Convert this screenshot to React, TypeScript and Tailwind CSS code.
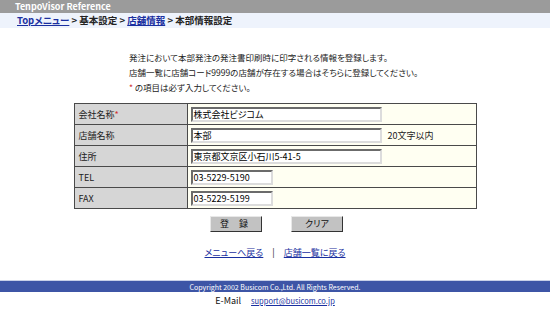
const FONT = "font-['Noto_Sans_CJK_JP','Noto_Sans',sans-serif]";

const ROWS = [
  { label: "会社名称", required: true, value: "株式会社ビジコム", wide: true },
  { label: "店舗名称", value: "本部", wide: true, note: "20文字以内" },
  { label: "住所", value: "東京都文京区小石川5-41-5", wide: true },
  { label: "TEL", value: "03-5229-5190" },
  { label: "FAX", value: "03-5229-5199" },
];

function Field({ value, wide }: { value: string; wide?: boolean }) {
  return (
    <div
      className={`${wide ? "w-[191px]" : "w-[82px]"} h-[15px] bg-white border-2 border-t-[#6b6b6b] border-l-[#6b6b6b] border-b-[#dcdcdc] border-r-[#dcdcdc] pl-[1px] text-[9px] leading-[11px] text-black whitespace-nowrap overflow-hidden`}
    >
      {value}
    </div>
  );
}

export default function App() {
  return (
    <div className={`w-[550px] h-[328px] bg-white text-black ${FONT} [font-feature-settings:'palt']`}>
      <div className="h-[13px] bg-[#9b9b9b] pl-[15px] text-[9px] leading-[13px] font-bold text-white">
        TenpoVisor Reference
      </div>
      <div className="h-[15px] bg-[#eef3fc] pl-[17px] text-[9.5px] leading-[15px] font-bold text-[#222]">
        <a className="text-[#1a2fa0] underline">Topメニュー</a> &gt; 基本設定 &gt;{" "}
        <a className="text-[#1a2fa0] underline">店舗情報</a> &gt; 本部情報設定
      </div>

      <div className="mx-auto mt-[22px] w-[292px] text-[8.5px] leading-[15px] text-[#222]">
        <p>発注において本部発注の発注書印刷時に印字される情報を登録します。</p>
        <p>店舗一覧に店舗コード9999の店舗が存在する場合はそちらに登録してください。</p>
        <p>
          <span className="text-[#d03030]">*</span> の項目は必ず入力してください。
        </p>
      </div>

      <table className="mx-auto mt-[8px] w-[403px] border-collapse border border-[#4a4a4a]">
        <tbody>
          {ROWS.map((r) => (
            <tr key={r.label} className="h-[21px]">
              <td className="w-[113px] bg-[#d6d6d6] border border-[#4a4a4a] pl-[4px] text-[9px] leading-[11px] text-[#222]">
                {r.label}
                {r.required && <span className="text-[#d03030]">*</span>}
              </td>
              <td className="bg-[#fffff2] border border-[#4a4a4a] pl-[3px]">
                <div className="flex items-center gap-[6px]">
                  <Field value={r.value} wide={r.wide} />
                  {r.note && <span className="text-[9px] leading-[11px] text-[#222]">{r.note}</span>}
                </div>
              </td>
            </tr>
          ))}
        </tbody>
      </table>

      <div className="mt-[7px] flex justify-center gap-[29px] pl-[3px]">
        <button className="w-[52px] h-[16px] bg-[#c2c2c2] border border-t-[#e8e8e8] border-l-[#e8e8e8] border-b-[#333] border-r-[#333] text-[9px] leading-[12px] tracking-[4px] text-[#111]">
          登 録
        </button>
        <button className="w-[52px] h-[16px] bg-[#c2c2c2] border border-t-[#e8e8e8] border-l-[#e8e8e8] border-b-[#333] border-r-[#333] text-[9px] leading-[12px] text-[#111]">
          クリア
        </button>
      </div>

      <div className="mt-[15px] flex justify-center items-center gap-[9px] text-[9px] leading-[12px]">
        <a className="text-[#1a2fa0] underline">メニューへ戻る</a>
        <span className="text-[#222]">|</span>
        <a className="text-[#1a2fa0] underline">店舗一覧に戻る</a>
      </div>

      <div className="mt-[21px] border-t border-[#c8d0e8] h-[12px] bg-[#3d55a6] text-center text-[7px] leading-[12px] text-white">
        Copyright 2002 Busicom Co.,Ltd. All Rights Reserved.
      </div>
      <div className="mt-[3px] flex justify-center items-baseline gap-[10px] leading-[11px]">
        <span className="text-[9px] text-[#111]">E-Mail</span>
        <a className="text-[7.5px] text-[#1a2fa0] underline">support@busicom.co.jp</a>
      </div>
    </div>
  );
}
